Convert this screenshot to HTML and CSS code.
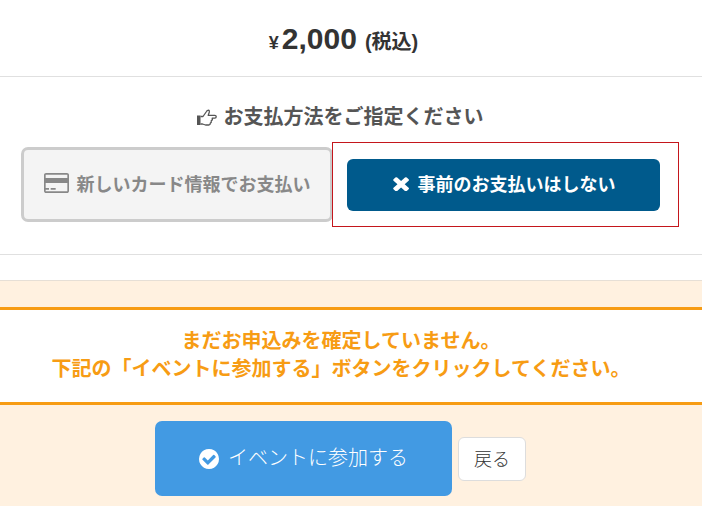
FILE: index.html
```html
<!DOCTYPE html>
<html lang="ja">
<head>
<meta charset="utf-8">
<title>お支払い</title>
<link rel="stylesheet" href="styles.css">
</head>
<body>
<section class="price">
  <span class="yen">¥</span><span class="amount">2,000</span><span class="tax">(税込)</span>
</section>
<section class="pay">
  <h2 class="pay-title">
    <svg class="hand" viewBox="0 0 20 17" aria-hidden="true"><rect x="0" y="6.500" width="3.500" height="9.500" fill="#555"/><path d="M3.500 7.500H6L9.500 2.500C10 1.200 11.800 .8 12.300 1.800 12.800 2.800 12 4.500 11.200 6.300H17.800C19.700 6.300 19.700 9.200 17.800 9.200H15.200C15.600 10.200 15 11.400 14.300 11.700 14.500 12.800 14 13.800 13.300 14 13.400 15.200 12.800 16 11.800 16H8.500L5.500 15H3.500" fill="none" stroke="#555" stroke-width="1.300" stroke-linejoin="round"/></svg>
    <span>お支払方法をご指定ください</span>
  </h2>
  <div class="options">
    <button class="card-btn" type="button">
      <svg class="card-ic" viewBox="0 128 1920 1536" aria-hidden="true"><path fill="#888" d="M1760 128q66 0 113 47t47 113v1216q0 66-47 113t-113 47h-1600q-66 0-113-47t-47-113v-1216q0-66 47-113t113-47h1600zm-1600 128q-13 0-22.500 9.500t-9.500 22.500v224h1664v-224q0-13-9.500-22.500t-22.500-9.500h-1600zm1600 1280q13 0 22.500-9.500t9.500-22.500v-608h-1664v608q0 13 9.500 22.500t22.500 9.500h1600zm-1632-128v-128h256v128h-256zm384 0v-128h384v128h-384z"/></svg>
      <span class="label">新しいカード情報でお支払い</span>
    </button>
    <div class="outline">
      <button class="none-btn" type="button">
        <svg class="x-ic" viewBox="212 256 1280 1280" preserveAspectRatio="none" aria-hidden="true"><path fill="#fff" d="M1490 1322q0 40-28 68l-136 136q-28 28-68 28t-68-28l-294-294-294 294q-28 28-68 28t-68-28l-136-136q-28-28-28-68t28-68l294-294-294-294q-28-28-28-68t28-68l136-136q28-28 68-28t68 28l294 294 294-294q28-28 68-28t68 28l136 136q28 28 28 68t-28 68l-294 294 294 294q28 28 28 68z"/></svg>
        <span class="label">事前のお支払いはしない</span>
      </button>
    </div>
  </div>
</section>
<div class="gap"></div>
<section class="confirm">
  <div class="notice">
    <p>まだお申込みを確定していません。</p>
    <p>下記の「イベントに参加する」ボタンをクリックしてください。</p>
  </div>
  <div class="actions">
    <button class="join-btn" type="button">
      <svg class="check-ic" viewBox="128 128 1536 1536" aria-hidden="true"><path fill="#fff" d="M1412 734q0-28-18-46l-91-90q-19-19-45-19t-45 19l-408 407-226-226q-19-19-45-19t-45 19l-91 90q-18 18-18 46 0 27 18 45l362 362q19 19 45 19 27 0 46-19l543-543q18-18 18-45zm252 162q0 209-103 385.500t-279.500 279.500-385.500 103-385.500-103-279.500-279.500-103-385.500 103-385.500 279.500-279.500 385.500-103 385.500 103 279.500 279.500 103 385.500z"/></svg>
      <span class="label">イベントに参加する</span>
    </button>
    <button class="back-btn" type="button"><span class="back-label">戻る</span></button>
  </div>
</section>
</body>
</html>
```
FILE: styles.css
```css
* { box-sizing: border-box; }
html, body { margin: 0; padding: 0; }
body {
  width: 702px;
  height: 506px;
  overflow: hidden;
  background: #fff;
  color: #333;
  font-family: "Liberation Sans", "Noto Sans CJK JP", sans-serif;
}
button { font-family: inherit; cursor: pointer; margin: 0; }
.label { padding-bottom: 4px; }

.price {
  height: 77px;
  border-bottom: 1px solid #e0e0e0;
  display: flex;
  justify-content: center;
  align-items: baseline;
  padding-top: 21px;
  padding-right: 15px;
  font-weight: bold;
  line-height: 36px;
}
.yen { font-size: 18px; margin-right: 3px; }
.amount { font-size: 30px; }
.tax { font-size: 20px; margin-left: 8px; }

.pay {
  height: 178px;
  border-bottom: 1px solid #e0e0e0;
  padding-top: 27px;
}
.pay-title {
  margin: 0;
  height: 26px;
  display: flex;
  justify-content: center;
  align-items: center;
  gap: 7px;
  font-size: 20px;
  line-height: 26px;
  color: #555;
  padding-right: 22px;
}
.hand { width: 20px; height: 17px; }

.options {
  display: flex;
  align-items: center;
  margin-top: 12px;
  padding-left: 21px;
}
.card-btn {
  width: 312px;
  height: 75px;
  border: 3px solid #ccc;
  border-radius: 7px;
  background: #f4f4f4;
  color: #888;
  font-size: 18px;
  font-weight: bold;
  display: flex;
  align-items: center;
  justify-content: center;
  gap: 8px;
  padding: 0;
}
.card-ic { width: 25px; height: 20px; margin-bottom: 3px; }
.outline {
  width: 347px;
  height: 85px;
  margin-left: -1px;
  border: 1px solid #c4161c;
  padding: 16px 18px 0 14px;
}
.none-btn {
  width: 313px;
  height: 52px;
  border: 0;
  border-radius: 6px;
  background: #005a8c;
  color: #fff;
  font-size: 18px;
  font-weight: bold;
  display: flex;
  align-items: center;
  justify-content: center;
  gap: 9px;
  padding: 0;
}
.x-ic { width: 17px; height: 15px; margin-bottom: 4px; }

.gap { height: 26px; border-bottom: 1px solid #e6dfd6; }

.confirm {
  height: 226px;
  background: #fff1e0;
  padding-top: 26px;
}
.notice {
  height: 98px;
  background: #fff;
  border-top: 3px solid #f79c14;
  border-bottom: 3px solid #f79c14;
  padding: 17px 20px 0 0;
  text-align: center;
  color: #f79c14;
  font-size: 20px;
  font-weight: bold;
  line-height: 28px;
}
.notice p { margin: 0; }
.actions {
  display: flex;
  align-items: center;
  margin-top: 16px;
  padding-left: 155px;
  gap: 6px;
}
.join-btn {
  width: 297px;
  height: 75px;
  border: 0;
  border-radius: 7px;
  background: #429ae3;
  color: #fff;
  font-size: 20px;
  font-weight: 300;
  display: flex;
  align-items: center;
  justify-content: center;
  gap: 9px;
  padding: 0;
}
.check-ic { width: 20px; height: 20px; }
.back-btn {
  width: 68px;
  height: 44px;
  border: 1px solid #ddd;
  border-radius: 6px;
  background: #fff;
  color: #333;
  font-size: 18px;
  font-weight: 300;
  padding: 0 0 2px;
  margin-top: 1px;
}
```
